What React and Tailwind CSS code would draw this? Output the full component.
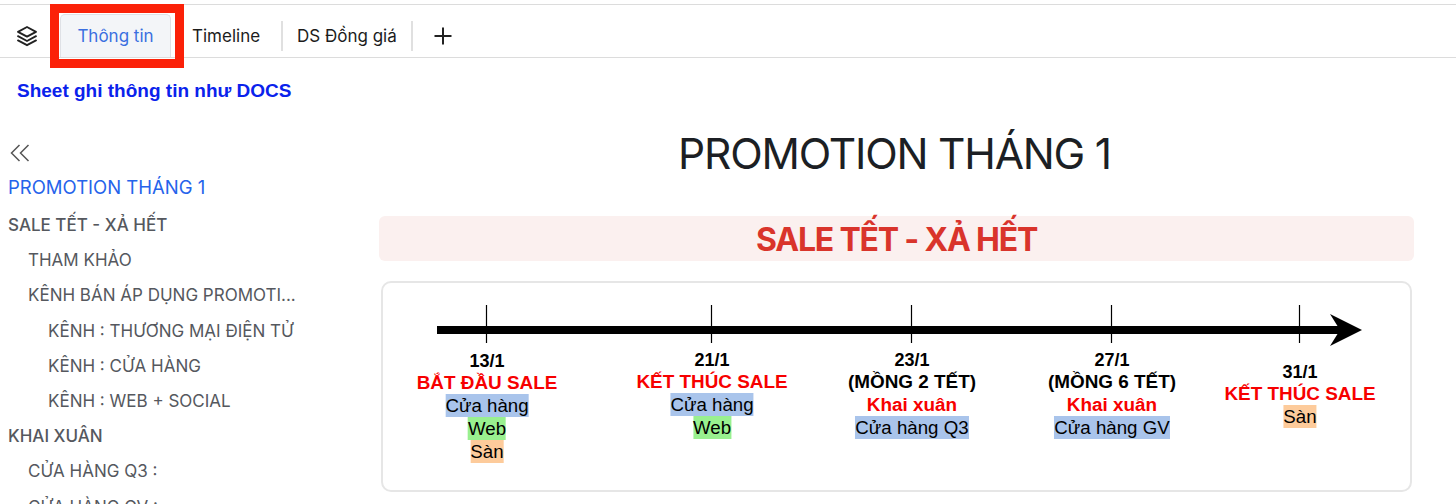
import React from "react";

const inter = "font-['Inter','Noto_Sans',sans-serif]";

function Tag({ color, children }) {
  return <span className={`${color} block h-[23px] w-fit text-[18.7px] leading-[23px] font-normal text-black`}>{children}</span>;
}

function Col({ x, top, date, lines, tags }) {
  return (
    <div className="absolute flex flex-col items-center whitespace-nowrap text-center font-['Liberation_Sans',sans-serif]" style={{ left: x, top, transform: "translateX(-50%)" }}>
      <div className="pt-[1px] text-[18px] leading-[20px] font-bold text-black">{date}</div>
      {lines.map((l) => (
        <div key={l.t} className={`text-[18.9px] leading-[23px] font-bold ${l.red ? "text-[#f70000]" : "text-black"}`}>{l.t}</div>
      ))}
      {tags.map((t) => (
        <Tag key={t.t} color={t.c}>{t.t}</Tag>
      ))}
    </div>
  );
}

const blue = "bg-[#a9c4eb]";
const green = "bg-[#99f08f]";
const orange = "bg-[#fdcb9b]";

const nav = [
  ["SALE TẾT - XẢ HẾT", "pl-2 font-medium"],
  ["THAM KHẢO", "pl-7"],
  ["KÊNH BÁN ÁP DỤNG PROMOTI...", "pl-7"],
  ["KÊNH : THƯƠNG MẠI ĐIỆN TỬ", "pl-12"],
  ["KÊNH : CỬA HÀNG", "pl-12"],
  ["KÊNH : WEB + SOCIAL", "pl-12"],
  ["KHAI XUÂN", "pl-2 font-medium"],
  ["CỬA HÀNG Q3 :", "pl-7"],
  ["CỬA HÀNG GV :", "pl-7"],
];

export default function App() {
  return (
    <div className={`relative h-[504px] w-[1456px] overflow-hidden bg-white ${inter}`}>
      {/* tab strip */}
      <div className="mt-[4px] flex h-[54px] items-end border-y border-y-[#dcdcdc] pl-[15px]">
        <div className="flex h-[43px] w-[45px] items-center">
          <svg width="24" height="24" viewBox="0 0 24 24" fill="none" stroke="#222" strokeWidth="1.9" strokeLinejoin="round" strokeLinecap="round">
            <path d="M12 3 21 7.8 12 12.6 3 7.8Z" />
            <path d="M3 12.2 12 17 21 12.2" />
            <path d="M3 16.4 12 21.2 21 16.4" />
          </svg>
        </div>
        <div className="flex h-[43px] w-[111px] items-center justify-center rounded-t-[5px] border-x border-t border-[#dfe1e6] bg-[#f3f5f8] pt-[2px] text-[17px] text-[#3a6fe0]">
          Thông tin
        </div>
        <div className="flex h-[43px] items-center pl-[21px] text-[17px] text-[#1c1c1c]">
          <span className="w-[89px] pt-[2px]">Timeline</span>
          <span className="h-[30px] w-[2px] bg-[#e0e0e0]" />
          <span className="w-[128px] pl-[14px] pt-[2px]">DS Đồng giá</span>
          <span className="h-[30px] w-[2px] bg-[#e0e0e0]" />
          <svg className="ml-[20px]" width="20" height="20" viewBox="0 0 20 20" stroke="#222" strokeWidth="2">
            <path d="M10 1.5v17M1.5 10h17" />
          </svg>
        </div>
      </div>

      {/* red highlight drawn over the tab */}
      <div className="absolute left-[50px] top-[4px] h-[64px] w-[134px] border-[9px] border-[#fb2108]" />

      <div className="pl-[17px] pt-[20px] font-['Liberation_Sans',sans-serif] text-[19px] leading-[25px] font-bold text-[#0a22ec]">
        Sheet ghi thông tin như DOCS
      </div>

      <div className="mt-[40px] flex">
        {/* outline */}
        <aside className="w-[379px] shrink-0">
          <svg className="ml-[10px] block" width="20" height="20" viewBox="0 0 20 20" fill="none" stroke="#555" strokeWidth="1.5">
            <path d="M9.5 2 1.5 10l8 8M18.5 2l-8 8 8 8" />
          </svg>
          <div className="mt-[7px] pl-2 text-[18.5px] leading-[35px] text-[#2563eb]">PROMOTION THÁNG 1</div>
          <ul className="mt-[3px]">
            {nav.map(([t, p]) => (
              <li key={t} className={`${p} h-[35.2px] text-[17px] leading-[35px] whitespace-nowrap text-[#55585e]`}>{t}</li>
            ))}
          </ul>
        </aside>

        {/* document */}
        <main className="-mt-[23px] w-[1035px]">
          <h1 className="h-[68px] pr-[4px] text-center text-[42.5px] leading-[68px] font-normal tracking-[-1.2px] text-[#1c1f24]">PROMOTION THÁNG 1</h1>
          <h2 className="mt-[28px] h-[45px] rounded-[6px] bg-[#fbf0ef] text-center text-[32px] leading-[47px] font-bold tracking-[-1.2px] text-[#d9342b]">
            SALE TẾT - XẢ HẾT
          </h2>
          <div className="relative mt-[20px] ml-[2px] h-[211px] w-[1031px] rounded-[10px] border-2 border-[#e6e6e6]">
            <svg className="absolute left-0 top-0" width="1027" height="207" viewBox="0 0 1027 207" fill="none">
              <rect x="54" y="43" width="904" height="8" fill="#000" />
              <path d="M979 47 947 31 957 47 947 63Z" fill="#000" />
              <path d="M103.5 22v38M328.5 22v38M528.5 22v38M728.5 22v38M916.5 22v38" stroke="#000" strokeWidth="1.2" />
            </svg>
            <Col x={104} top={67} date="13/1" lines={[{ t: "BẮT ĐẦU SALE", red: true }]} tags={[{ t: "Cửa hàng", c: blue }, { t: "Web", c: green }, { t: "Sàn", c: orange }]} />
            <Col x={329} top={66} date="21/1" lines={[{ t: "KẾT THÚC SALE", red: true }]} tags={[{ t: "Cửa hàng", c: blue }, { t: "Web", c: green }]} />
            <Col x={529} top={66} date="23/1" lines={[{ t: "(MỒNG 2 TẾT)" }, { t: "Khai xuân", red: true }]} tags={[{ t: "Cửa hàng Q3", c: blue }]} />
            <Col x={729} top={66} date="27/1" lines={[{ t: "(MỒNG 6 TẾT)" }, { t: "Khai xuân", red: true }]} tags={[{ t: "Cửa hàng GV", c: blue }]} />
            <Col x={917} top={78} date="31/1" lines={[{ t: "KẾT THÚC SALE", red: true }]} tags={[{ t: "Sàn", c: orange }]} />
          </div>
        </main>
      </div>
    </div>
  );
}
